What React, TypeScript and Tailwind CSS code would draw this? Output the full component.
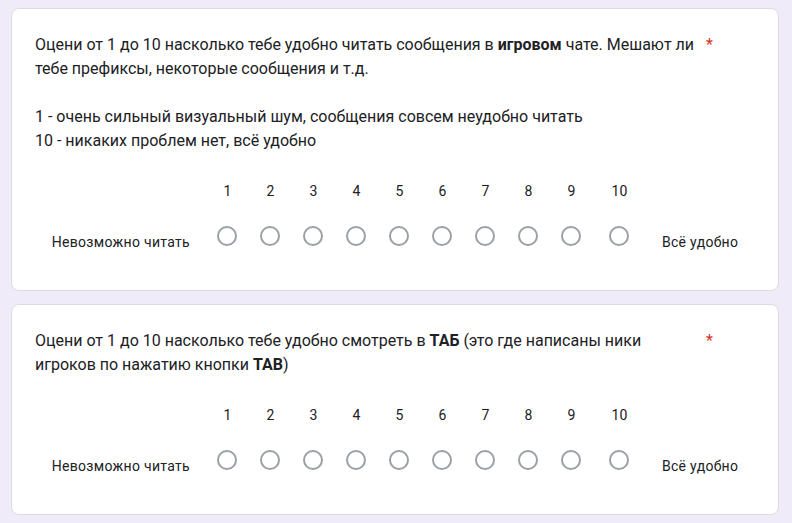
import React from "react";

const nums = [1, 2, 3, 4, 5, 6, 7, 8, 9, 10];

function Scale() {
  return (
    <div className="mt-[28px] flex items-end justify-center text-[14px] leading-[20px] text-[#202124]">
      <div className="pr-[16px] tracking-[0.3px]">Невозможно читать</div>
      {nums.map((n) => (
        <div
          key={n}
          className={`flex flex-col items-center pb-[6px] ${n === 10 ? "w-[53px]" : "w-[43px]"}`}
        >
          <div className="h-[20px]">{n}</div>
          <div className="mt-[25px] h-[20px] w-[20px] rounded-full border-2 border-[#9aa0a6] box-border" />
        </div>
      ))}
      <div className="pl-[16px] tracking-[0.3px]">Всё удобно</div>
    </div>
  );
}

function Card({ children }: { children: React.ReactNode }) {
  return (
    <div className="w-[768px] rounded-[8px] border border-[#dadce0] bg-white px-[23px] pt-[24px] pb-[38px]">
      {children}
    </div>
  );
}

export default function App() {
  return (
    <div
      className="min-h-[523px] w-[792px] bg-[#f0ebf8] pl-[11px] pt-[8px] flex flex-col gap-[13px]"
      style={{ fontFamily: "Roboto, 'Noto Sans', sans-serif" }}
    >
      <Card>
        <div className="flex text-[16px] leading-[24px] text-[#202124]">
          <div className="w-[664px]">
            <div>
              Оцени от 1 до 10 насколько тебе удобно читать сообщения в <b>игровом</b> чате. Мешают ли тебе префиксы, некоторые сообщения и т.д.
            </div>
            <div className="h-[24px]" />
            <div>1 - очень сильный визуальный шум, сообщения совсем неудобно читать</div>
            <div>10 - никаких проблем нет, всё удобно</div>
          </div>
          <div className="pl-[7px] text-[#d93025]">*</div>
        </div>
        <Scale />
      </Card>
      <Card>
        <div className="flex text-[16px] leading-[24px] text-[#202124]">
          <div className="w-[664px]">
            Оцени от 1 до 10 насколько тебе удобно смотреть в <b>ТАБ</b> (это где написаны ники игроков по нажатию кнопки <b>TAB</b>)
          </div>
          <div className="pl-[7px] text-[#d93025]">*</div>
        </div>
        <Scale />
      </Card>
    </div>
  );
}
